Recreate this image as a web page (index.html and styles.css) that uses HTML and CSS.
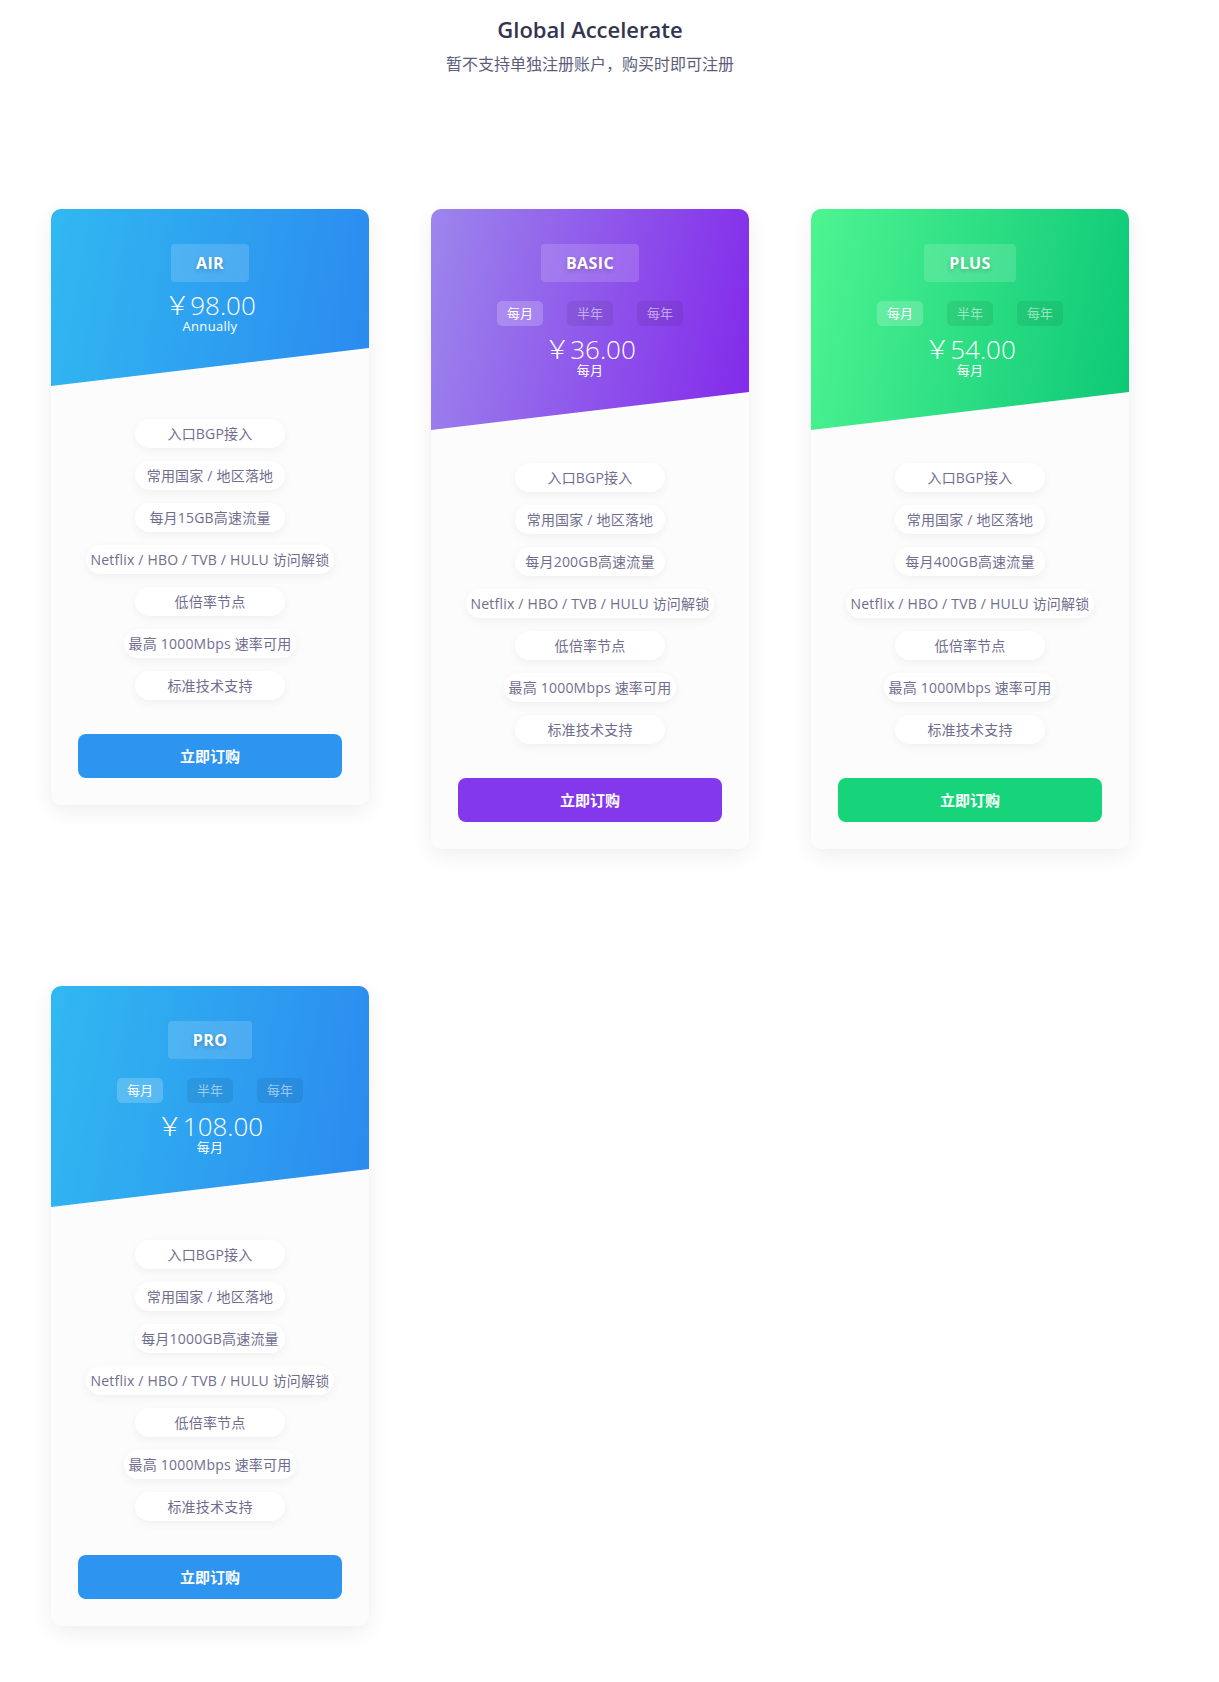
FILE: index.html
```html
<!DOCTYPE html>
<html lang="zh-CN">
<head>
<meta charset="utf-8">
<title>Global Accelerate</title>
<link rel="stylesheet" href="styles.css">
</head>
<body>
<div class="page">
<header class="intro">
  <h1 class="intro-title">Global Accelerate</h1>
  <p class="intro-sub">暂不支持单独注册账户，购买时即可注册</p>
</header>

<main class="plans">
  <section class="card card-blue">
    <div class="card-head">
      <div class="plan-name">AIR</div>
      <div class="price">￥98.00</div>
      <div class="period">Annually</div>
    </div>
    <ul class="features">
      <li>入口BGP接入</li>
      <li>常用国家 / 地区落地</li>
      <li>每月15GB高速流量</li>
      <li>Netflix / HBO / TVB / HULU 访问解锁</li>
      <li>低倍率节点</li>
      <li>最高 1000Mbps 速率可用</li>
      <li>标准技术支持</li>
    </ul>
    <a class="buy" href="#">立即订购</a>
  </section>

  <section class="card card-purple">
    <div class="card-head">
      <div class="plan-name">BASIC</div>
      <div class="tabs"><span class="tab active">每月</span><span class="tab">半年</span><span class="tab">每年</span></div>
      <div class="price">￥36.00</div>
      <div class="period">每月</div>
    </div>
    <ul class="features">
      <li>入口BGP接入</li>
      <li>常用国家 / 地区落地</li>
      <li>每月200GB高速流量</li>
      <li>Netflix / HBO / TVB / HULU 访问解锁</li>
      <li>低倍率节点</li>
      <li>最高 1000Mbps 速率可用</li>
      <li>标准技术支持</li>
    </ul>
    <a class="buy" href="#">立即订购</a>
  </section>

  <section class="card card-green">
    <div class="card-head">
      <div class="plan-name">PLUS</div>
      <div class="tabs"><span class="tab active">每月</span><span class="tab">半年</span><span class="tab">每年</span></div>
      <div class="price">￥54.00</div>
      <div class="period">每月</div>
    </div>
    <ul class="features">
      <li>入口BGP接入</li>
      <li>常用国家 / 地区落地</li>
      <li>每月400GB高速流量</li>
      <li>Netflix / HBO / TVB / HULU 访问解锁</li>
      <li>低倍率节点</li>
      <li>最高 1000Mbps 速率可用</li>
      <li>标准技术支持</li>
    </ul>
    <a class="buy" href="#">立即订购</a>
  </section>

  <section class="card card-blue">
    <div class="card-head">
      <div class="plan-name">PRO</div>
      <div class="tabs"><span class="tab active">每月</span><span class="tab">半年</span><span class="tab">每年</span></div>
      <div class="price">￥108.00</div>
      <div class="period">每月</div>
    </div>
    <ul class="features">
      <li>入口BGP接入</li>
      <li>常用国家 / 地区落地</li>
      <li>每月1000GB高速流量</li>
      <li>Netflix / HBO / TVB / HULU 访问解锁</li>
      <li>低倍率节点</li>
      <li>最高 1000Mbps 速率可用</li>
      <li>标准技术支持</li>
    </ul>
    <a class="buy" href="#">立即订购</a>
  </section>
</main>
</div>
</body>
</html>
```

FILE: styles.css
```css
* { box-sizing: border-box; }

body {
  margin: 0;
  background: #ffffff;
  font-family: "Open Sans", "Noto Sans CJK SC", sans-serif;
  color: #5d5d7a;
}

.page {
  width: 1180px;
  padding: 0 51px;
}

.intro {
  text-align: center;
  padding-top: 14px;
}

.intro-title {
  margin: 0;
  font-size: 22px;
  line-height: 30px;
  font-weight: 600;
  color: #34344f;
}

.intro-sub {
  margin: 8px 0 0;
  font-size: 16px;
  line-height: 24px;
  color: #5d5d7a;
}

.plans {
  display: grid;
  grid-template-columns: repeat(3, 318px);
  column-gap: 62px;
  row-gap: 137px;
  align-items: start;
  margin-top: 133px;
  padding-bottom: 50px;
}

.card {
  background: #fcfcfc;
  border-radius: 10px;
  box-shadow: 0 6px 22px rgba(0, 0, 0, 0.07);
  overflow: hidden;
  display: flex;
  flex-direction: column;
  align-items: center;
  padding-bottom: 27px;
}

.card-head {
  width: 100%;
  padding: 35px 0 52px;
  display: flex;
  flex-direction: column;
  align-items: center;
  color: #fff;
  clip-path: polygon(0 0, 100% 0, 100% calc(100% - 38px), 0 100%);
}

.card-blue .card-head { background: linear-gradient(100deg, #31b8f1 0%, #2b8aef 100%); }
.card-purple .card-head { background: linear-gradient(100deg, #9c86ec 0%, #8229ea 100%); }
.card-green .card-head { background: linear-gradient(100deg, #4ef491 0%, #0cc876 100%); }

.plan-name {
  height: 38px;
  line-height: 38px;
  padding: 0 25px;
  border-radius: 4px;
  background: rgba(255, 255, 255, 0.15);
  font-size: 16px;
  font-weight: 700;
  letter-spacing: 0.4px;
  text-shadow: 0 2px 4px rgba(0, 0, 0, 0.2);
}

.tabs {
  display: flex;
  gap: 24px;
  margin-top: 19px;
}

.tab {
  width: 46px;
  height: 25px;
  line-height: 25px;
  text-align: center;
  border-radius: 5px;
  font-size: 13px;
  background: rgba(0, 0, 0, 0.07);
  color: rgba(255, 255, 255, 0.55);
}

.tab.active {
  background: rgba(255, 255, 255, 0.2);
  color: #fff;
}

.price {
  margin-top: 11px;
  font-size: 26px;
  line-height: 24px;
  font-weight: 300;
}

.period {
  margin-top: 1px;
  font-size: 13px;
  line-height: 16px;
  letter-spacing: 0.3px;
}

.features {
  list-style: none;
  margin: 33px 0 0;
  padding: 0;
  display: flex;
  flex-direction: column;
  align-items: center;
  gap: 13px;
}

.features li {
  min-width: 150px;
  height: 29px;
  line-height: 29px;
  padding: 0 5px;
  text-align: center;
  border-radius: 15px;
  background: #ffffff;
  box-shadow: 0 3px 10px rgba(0, 0, 0, 0.05);
  font-size: 14px;
  letter-spacing: 0.2px;
  color: #6f6e8e;
  white-space: nowrap;
}

.buy {
  display: block;
  margin-top: 34px;
  width: 264px;
  height: 44px;
  line-height: 44px;
  border-radius: 8px;
  text-align: center;
  text-decoration: none;
  color: #fff;
  font-size: 15px;
  font-weight: 700;
  font-family: "Noto Sans CJK SC", sans-serif;
}

.card-blue .buy { background: #2d95f0; }
.card-purple .buy { background: #8338ec; }
.card-green .buy { background: #17d47b; }
```
